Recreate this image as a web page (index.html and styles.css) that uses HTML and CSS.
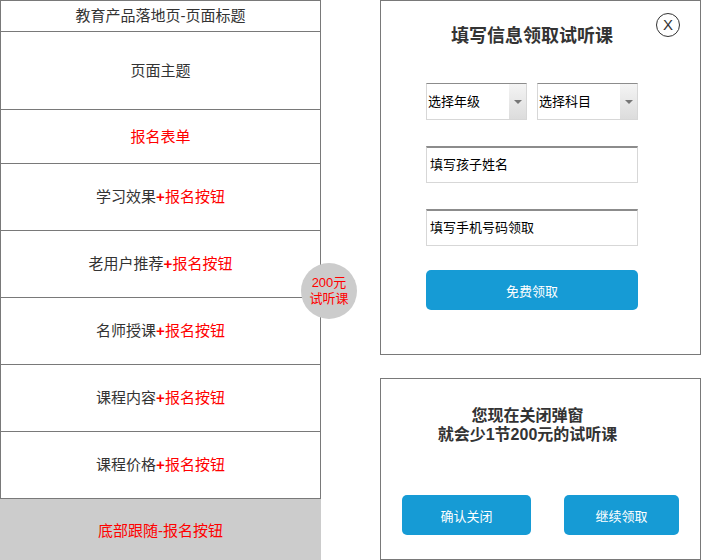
FILE: index.html
```html
<!DOCTYPE html>
<html lang="en">

<head>
  <meta charset="UTF-8">
  <meta name="viewport" content="width=device-width, initial-scale=1.0">
  <title>落地页</title>
  <link rel="stylesheet" href="styles.css">
</head>

<body>
  <div id="page">
    <div id="landing">
      <div class="row row-title">教育产品落地页-页面标题</div>
      <div class="row row-theme">页面主题</div>
      <div class="row row-form red">报名表单</div>
      <div class="row row-block">学习效果<b class="red">+</b><span class="red">报名按钮</span></div>
      <div class="row row-block">老用户推荐<b class="red">+</b><span class="red">报名按钮</span></div>
      <div class="row row-block">名师授课<b class="red">+</b><span class="red">报名按钮</span></div>
      <div class="row row-block">课程内容<b class="red">+</b><span class="red">报名按钮</span></div>
      <div class="row row-block">课程价格<b class="red">+</b><span class="red">报名按钮</span></div>
      <div class="footer red">底部跟随-报名按钮</div>
      <div class="badge">200元<br>试听课</div>
    </div>

    <div id="popups">
      <div class="panel panel-form">
        <span class="close">X</span>
        <div class="form">
          <h2>填写信息领取试听课</h2>
          <div class="selects">
            <div class="select">选择年级<span class="select-arrow"></span></div>
            <div class="select">选择科目<span class="select-arrow"></span></div>
          </div>
          <div class="input">填写孩子姓名</div>
          <div class="input">填写手机号码领取</div>
          <div class="btn btn-submit">免费领取</div>
        </div>
      </div>

      <div class="panel panel-confirm">
        <p class="warn">您现在关闭弹窗<br>就会少1节200元的试听课</p>
        <div class="actions">
          <div class="btn btn-close">确认关闭</div>
          <div class="btn btn-keep">继续领取</div>
        </div>
      </div>
    </div>
  </div>
</body>

</html>
```

FILE: styles.css
```css
body {
  margin: 0;
  background: #fff;
  font-family: "Liberation Sans", "Noto Sans CJK SC", sans-serif;
  color: #333;
}

#page {
  display: flex;
  align-items: flex-start;
  width: 701px;
  height: 560px;
  overflow: hidden;
}

.red {
  color: #ff0000;
}

/* left column: page wireframe */
#landing {
  position: relative;
  width: 321px;
  flex: none;
}

#landing .row {
  display: flex;
  align-items: center;
  justify-content: center;
  box-sizing: border-box;
  border: 1px solid #797979;
  border-top: none;
  font-size: 15px;
  line-height: 20px;
}

#landing .row-title {
  border-top: 1px solid #797979;
  height: 32px;
}

#landing .row-theme {
  height: 78px;
}

#landing .row-form {
  height: 54px;
}

#landing .row-block {
  height: 67px;
}

#landing .row b {
  font-weight: bold;
}

#landing .footer {
  display: flex;
  align-items: center;
  justify-content: center;
  height: 61px;
  background: #cccccc;
  font-size: 15px;
}

#landing .badge {
  position: absolute;
  left: 301px;
  top: 263px;
  width: 56px;
  height: 56px;
  border-radius: 50%;
  background: #cccccc;
  color: #ff0000;
  font-size: 13px;
  line-height: 16px;
  display: flex;
  align-items: center;
  justify-content: center;
  text-align: center;
}

/* right column: popups */
#popups {
  margin-left: 59px;
  width: 321px;
  display: flex;
  flex-direction: column;
  gap: 23px;
}

.panel {
  position: relative;
  box-sizing: border-box;
  border: 1px solid #797979;
}

.panel-form {
  height: 355px;
}

.panel-form .close {
  position: absolute;
  top: 12px;
  left: 275px;
  width: 22px;
  height: 22px;
  border: 1px solid #333;
  border-radius: 50%;
  font-size: 15px;
  line-height: 22px;
  text-align: center;
  color: #333;
}

.form {
  width: 212px;
  margin-left: 45px;
  padding-top: 24px;
}

.form h2 {
  margin: 0;
  font-size: 18px;
  line-height: 22px;
  font-weight: bold;
  text-align: center;
  color: #333;
}

.selects {
  display: flex;
  justify-content: space-between;
  margin-top: 36px;
}

.select {
  position: relative;
  box-sizing: border-box;
  width: 101px;
  height: 37px;
  border: 1px solid #d7d7d7;
  border-top: 1px solid #8c8c8c;
  padding-left: 1px;
  font-size: 13px;
  line-height: 35px;
  color: #000;
}

.select-arrow {
  position: absolute;
  top: 0;
  right: 0;
  width: 17px;
  height: 35px;
  background: linear-gradient(#f4f4f4, #dcdcdc);
}

.select-arrow::after {
  content: "";
  position: absolute;
  left: 5px;
  top: 16px;
  border-left: 4px solid transparent;
  border-right: 4px solid transparent;
  border-top: 4px solid #777;
}

.input {
  box-sizing: border-box;
  height: 37px;
  margin-top: 26px;
  border: 1px solid #d7d7d7;
  border-top: 2px solid #8c8c8c;
  padding-left: 3px;
  font-size: 13px;
  line-height: 34px;
  color: #000;
}

.btn {
  display: flex;
  align-items: center;
  justify-content: center;
  height: 40px;
  border-radius: 5px;
  background: #169bd5;
  color: #fff;
  font-size: 13px;
}

.btn-submit {
  margin-top: 24px;
}

.panel-confirm {
  height: 182px;
}

.warn {
  margin: 27px 26px 0 0;
  font-size: 16px;
  line-height: 19px;
  font-weight: bold;
  text-align: center;
  color: #333;
}

.actions {
  display: flex;
  justify-content: space-between;
  padding: 0 21px 0 21px;
  margin-top: 51px;
}

.btn-close {
  width: 129px;
}

.btn-keep {
  width: 115px;
}
```
